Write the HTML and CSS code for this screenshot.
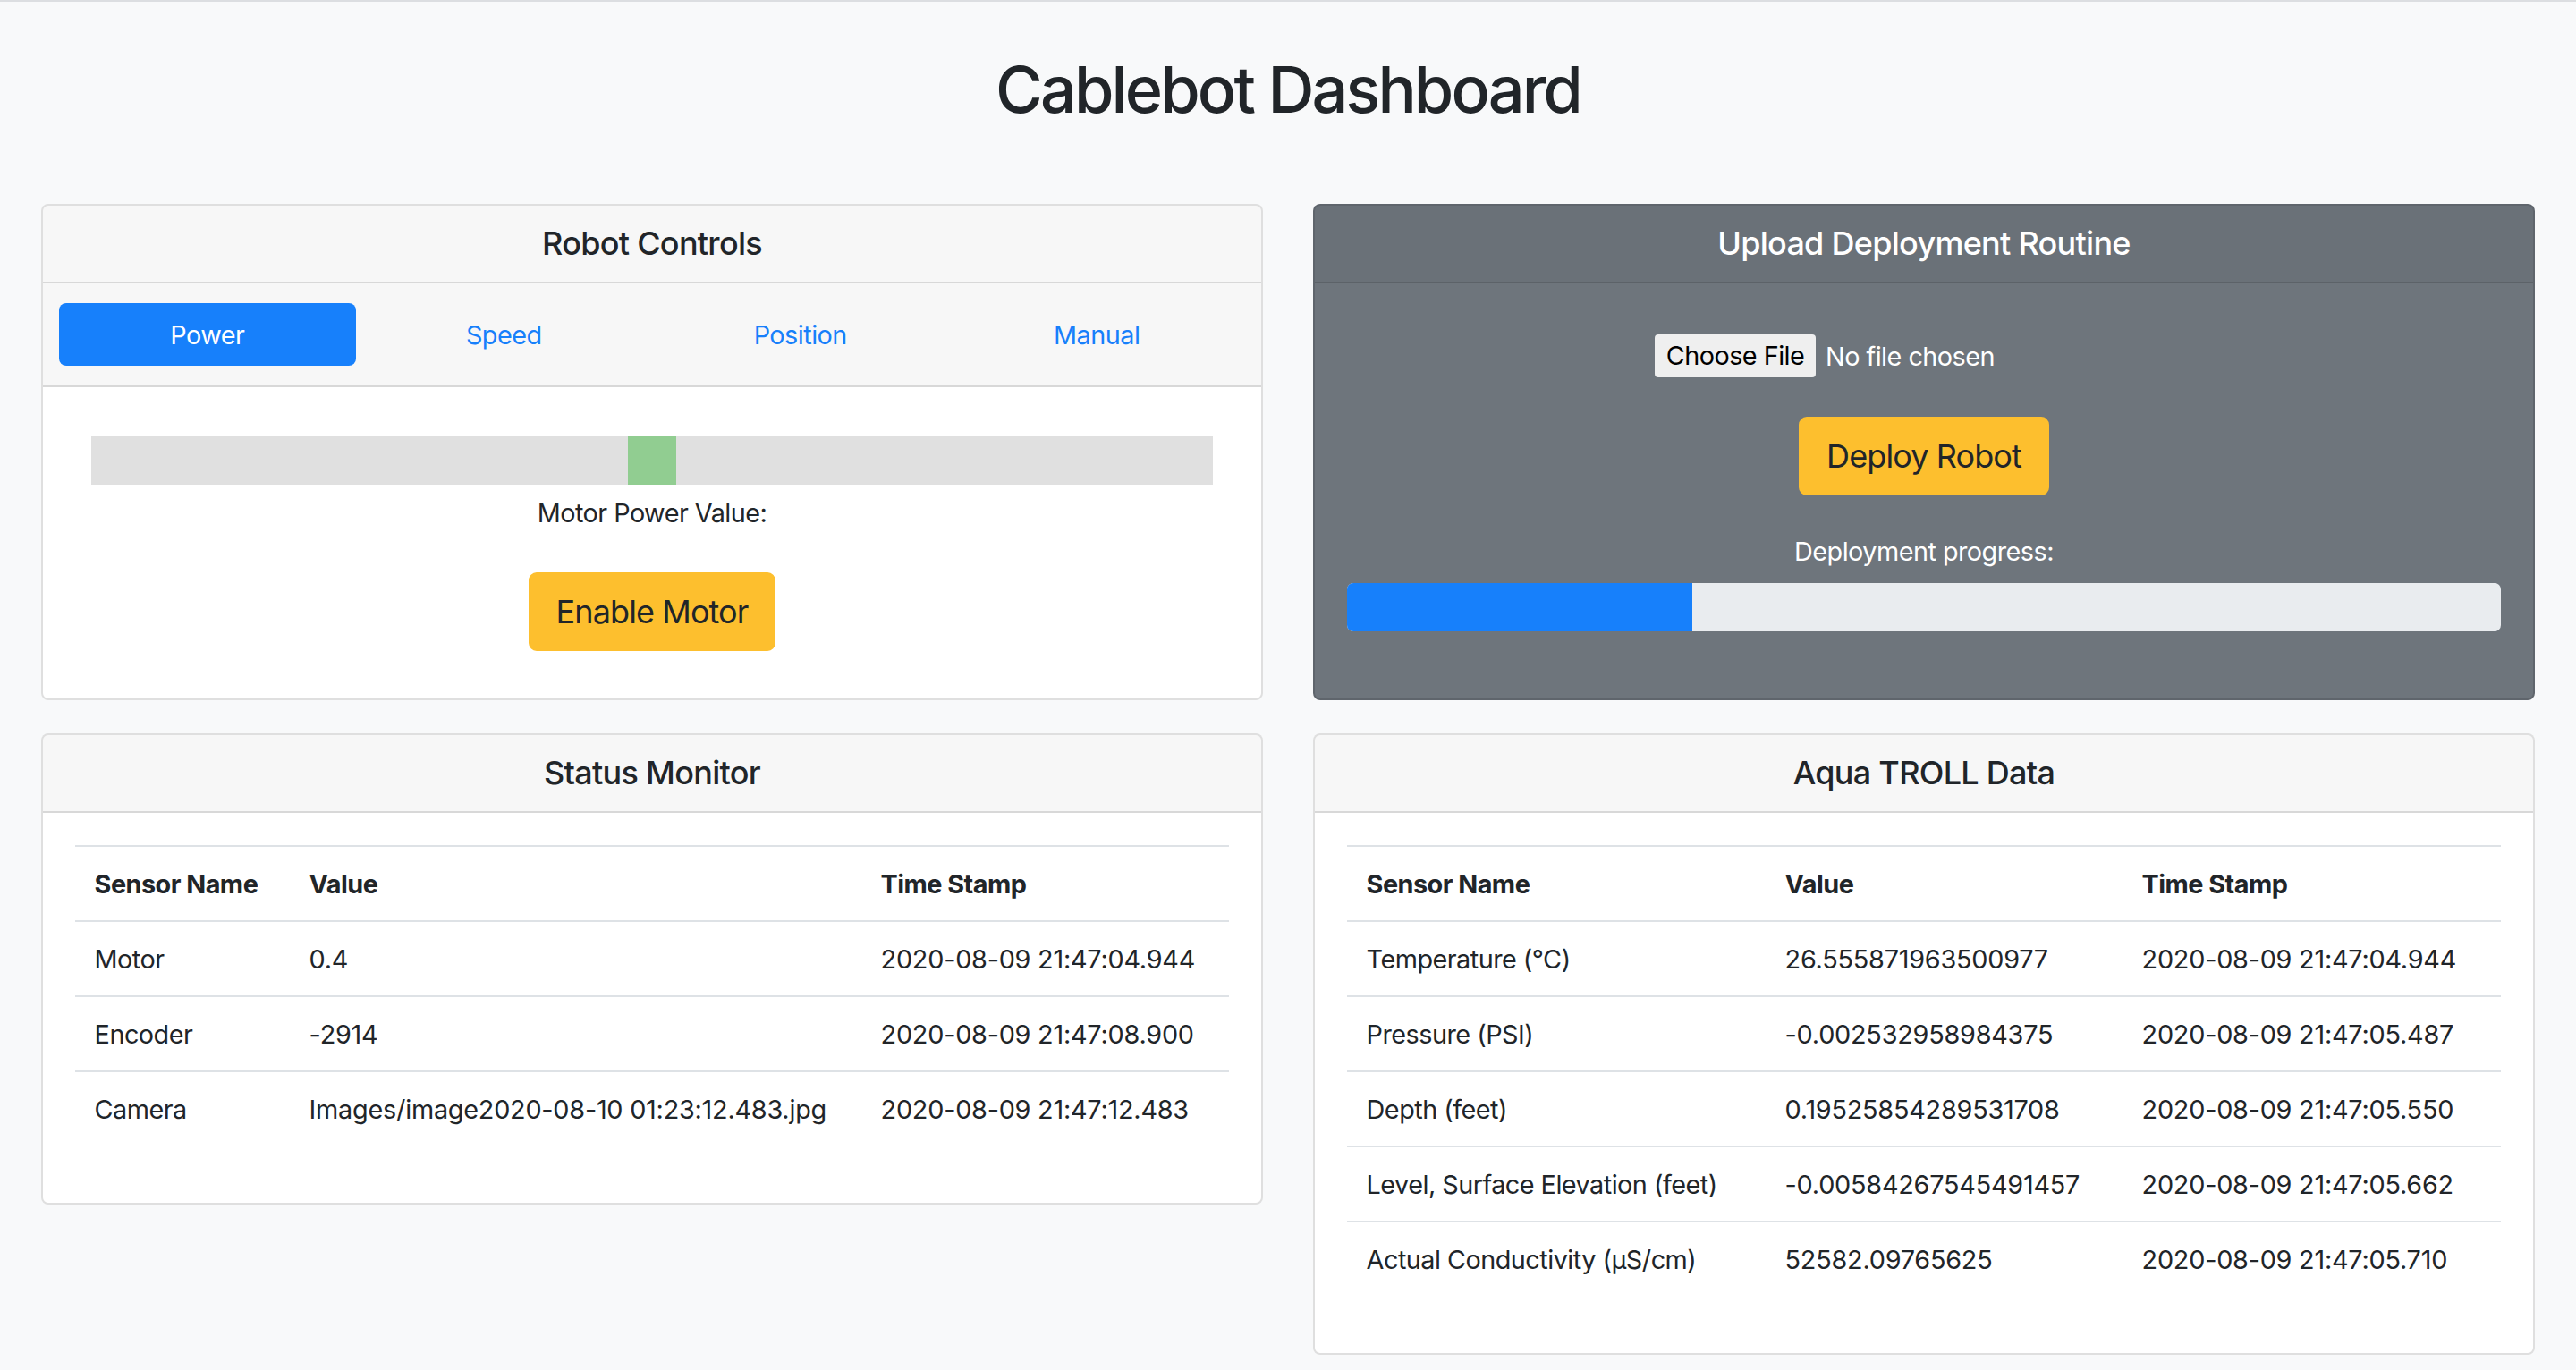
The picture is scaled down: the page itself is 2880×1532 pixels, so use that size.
FILE: index.html
```html
<!DOCTYPE html>
<html lang="en">
<head>
<meta charset="utf-8">
<title>Cablebot Dashboard</title>
<link rel="stylesheet" href="styles.css">
</head>
<body>
<div class="page">
  <h1 class="title">Cablebot Dashboard</h1>

  <div class="row row-top">
    <div class="card">
      <div class="card-header">Robot Controls</div>
      <div class="card-header tabs">
        <nav class="pills">
          <a class="pill active">Power</a>
          <a class="pill">Speed</a>
          <a class="pill">Position</a>
          <a class="pill">Manual</a>
        </nav>
      </div>
      <div class="card-body controls">
        <div class="slider"><div class="thumb"></div></div>
        <p class="value-label">Motor Power Value: </p>
        <button class="btn btn-warning motor-btn">Enable Motor</button>
      </div>
    </div>

    <div class="card card-dark">
      <div class="card-header">Upload Deployment Routine</div>
      <div class="card-body upload">
        <div class="file-input">
          <span class="file-btn">Choose File</span>
          <span class="file-name">No file chosen</span>
        </div>
        <button class="btn btn-warning deploy-btn">Deploy Robot</button>
        <p class="progress-label">Deployment progress:</p>
        <div class="progress"><div class="progress-bar" style="width: 29.9%"></div></div>
      </div>
    </div>
  </div>

  <div class="row row-bottom">
    <div class="card">
      <div class="card-header">Status Monitor</div>
      <div class="card-body">
        <table class="table status-table">
          <colgroup><col class="c1"><col class="c2"><col class="c3"></colgroup>
          <thead>
            <tr><th>Sensor Name</th><th>Value</th><th>Time Stamp</th></tr>
          </thead>
          <tbody>
            <tr><td>Motor</td><td>0.4</td><td>2020-08-09 21:47:04.944</td></tr>
            <tr><td>Encoder</td><td>-2914</td><td>2020-08-09 21:47:08.900</td></tr>
            <tr><td>Camera</td><td>Images/image2020-08-10 01:23:12.483.jpg</td><td>2020-08-09 21:47:12.483</td></tr>
          </tbody>
        </table>
      </div>
    </div>

    <div class="card">
      <div class="card-header">Aqua TROLL Data</div>
      <div class="card-body">
        <table class="table troll-table">
          <colgroup><col class="c1"><col class="c2"><col class="c3"></colgroup>
          <thead>
            <tr><th>Sensor Name</th><th>Value</th><th>Time Stamp</th></tr>
          </thead>
          <tbody>
            <tr><td>Temperature (°C)</td><td>26.555871963500977</td><td>2020-08-09 21:47:04.944</td></tr>
            <tr><td>Pressure (PSI)</td><td>-0.002532958984375</td><td>2020-08-09 21:47:05.487</td></tr>
            <tr><td>Depth (feet)</td><td>0.19525854289531708</td><td>2020-08-09 21:47:05.550</td></tr>
            <tr><td>Level, Surface Elevation (feet)</td><td>-0.00584267545491457</td><td>2020-08-09 21:47:05.662</td></tr>
            <tr><td>Actual Conductivity (µS/cm)</td><td>52582.09765625</td><td>2020-08-09 21:47:05.710</td></tr>
          </tbody>
        </table>
      </div>
    </div>
  </div>
</div>
</body>
</html>
```
FILE: styles.css
```css
* { box-sizing: border-box; }

html, body {
  margin: 0;
  padding: 0;
  background: #f8f9fa;
}

body {
  border-top: 2px solid #dcdee1;
  font-family: "Inter", "Liberation Sans", sans-serif;
  font-size: 28.8px;
  line-height: 43px;
  letter-spacing: -0.018em;
  color: #212529;
}

.page {
  padding: 0 46px;
}

.title {
  margin: 55px 0 85px;
  font-size: 72px;
  line-height: 86px;
  font-weight: 500;
  letter-spacing: -0.04em;
  text-align: center;
  color: #212529;
}

.row {
  display: grid;
  grid-template-columns: 1fr 1fr;
  column-gap: 56px;
}

.row-top {
  align-items: stretch;
  margin-bottom: 37px;
}

.row-bottom {
  align-items: start;
}

.card {
  display: flex;
  flex-direction: column;
  background: #fff;
  border: 2px solid rgba(0, 0, 0, 0.125);
  border-radius: 8px;
  overflow: hidden;
}

.card-header {
  padding: 21px 36px;
  background: rgba(0, 0, 0, 0.03);
  border-bottom: 2px solid rgba(0, 0, 0, 0.125);
  font-size: 36px;
  line-height: 43px;
  font-weight: 500;
  letter-spacing: -0.02em;
  text-align: center;
}

.card-header.tabs {
  padding: 22px 18px;
}

.pills {
  display: grid;
  grid-template-columns: repeat(4, 1fr);
}

.pill {
  display: block;
  height: 70px;
  padding-top: 1px;
  line-height: 70px;
  border-radius: 8px;
  font-size: 28.8px;
  font-weight: 400;
  letter-spacing: -0.018em;
  color: #1780fb;
  text-align: center;
  cursor: pointer;
}

.pill.active {
  background: #1780fb;
  color: #fff;
}

.card-body {
  flex: 1;
  padding: 36px;
}

.controls, .upload {
  display: flex;
  flex-direction: column;
  align-items: center;
}

.slider {
  align-self: stretch;
  display: flex;
  justify-content: center;
  height: 54px;
  margin: 19px 18px 10px;
  background: #e0e0e0;
}

.thumb {
  width: 54px;
  height: 54px;
  background: #91cd91;
}

.value-label {
  margin: 0;
  line-height: 43px;
  text-align: center;
}

.btn {
  display: inline-block;
  height: 88px;
  padding: 0 29px;
  border-radius: 9px;
  font-family: inherit;
  font-size: 36px;
  line-height: 84px;
  letter-spacing: -0.025em;
  color: #212529;
  cursor: pointer;
}

.btn-warning {
  background: #fdbf2e;
  border: 2px solid #fdbf2e;
}

.motor-btn {
  margin: 45px 0 17px;
}

.card-dark {
  background: #6e757c;
  border-color: rgba(0, 0, 0, 0.13);
  color: #fff;
}

.card-dark .card-header {
  background: rgba(0, 0, 0, 0.03);
  border-bottom-color: rgba(0, 0, 0, 0.13);
}

.file-input {
  display: flex;
  align-items: center;
  gap: 11px;
  width: 602px;
  margin-top: 21px;
}

.file-btn {
  width: 180px;
  height: 48px;
  line-height: 48px;
  background: #efefef;
  border-radius: 4px;
  color: #000;
  text-align: center;
}

.file-name {
  color: #fff;
}

.deploy-btn {
  margin-top: 44px;
}

.progress-label {
  margin: 41px 0 0;
  line-height: 43px;
  color: #fff;
}

.progress {
  align-self: stretch;
  height: 54px;
  margin: 14px 0 39px;
  background: #e9ecef;
  border-radius: 7px;
  overflow: hidden;
  display: flex;
}

.progress-bar {
  height: 100%;
  background: #1780fb;
}

.table {
  width: 100%;
  border-collapse: separate;
  border-spacing: 0;
  table-layout: fixed;
  margin-bottom: 28px;
}

.table th,
.table td {
  padding: 19.5px 21.6px;
  border-top: 2px solid #dee2e6;
  line-height: 43px;
  text-align: left;
  vertical-align: middle;
  white-space: nowrap;
}

.table th {
  font-weight: 700;
}

.table td + td {
  letter-spacing: -0.008em;
}

.status-table col.c1 { width: 240px; }
.status-table col.c2 { width: 639px; }

.troll-table col.c1 { width: 468px; }
.troll-table col.c2 { width: 399px; }
```
